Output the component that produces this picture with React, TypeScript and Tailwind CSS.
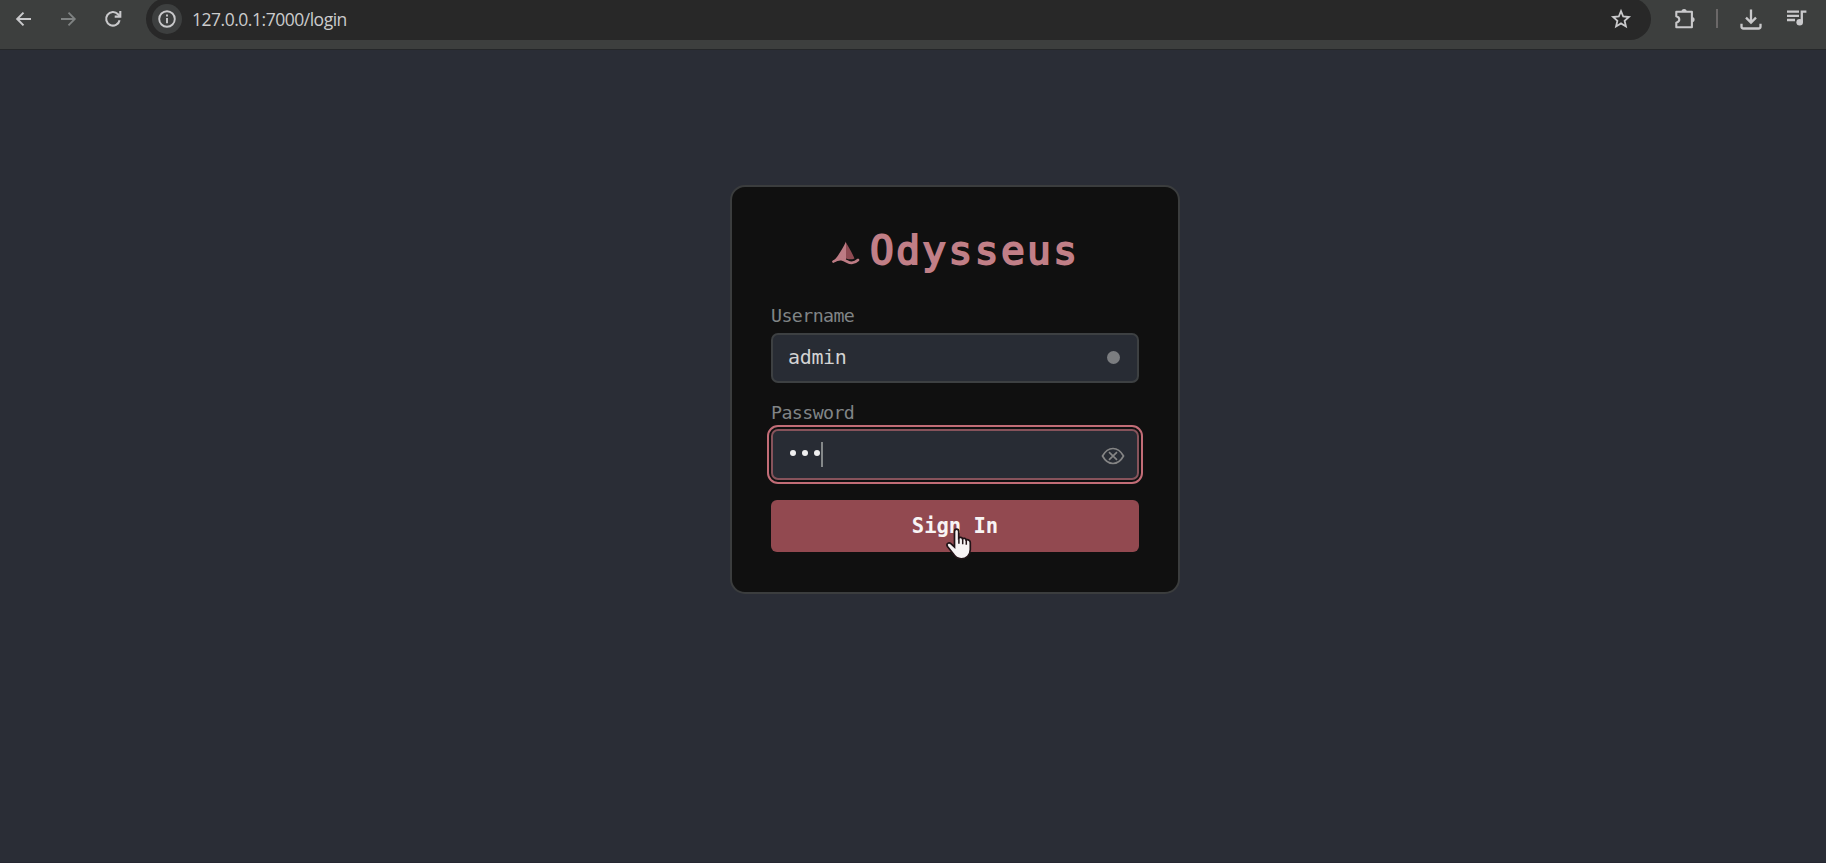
import { useState } from 'react';

function Toolbar() {
  return (
    <header className="flex h-[50px] shrink-0 items-start border-b border-[#252729] bg-[#3d3f3e] text-[#c9c9cb]">
      <div className="flex h-[37px] w-[146px] shrink-0 items-center">
        <svg className="ml-[14px] h-[20px] w-[20px]" viewBox="0 0 20 20" fill="none" stroke="currentColor" strokeWidth="2">
          <path d="M17 10H3.5M9.5 3.6 3.2 10l6.3 6.4" />
        </svg>
        <svg className="ml-[24px] h-[20px] w-[20px] text-[#7f8282]" viewBox="0 0 20 20" fill="none" stroke="currentColor" strokeWidth="1.8">
          <path d="M3 10h13.5M10.5 3.6 16.8 10l-6.3 6.4" />
        </svg>
        <svg className="ml-[25px] h-[20px] w-[20px]" viewBox="0 0 20 20" fill="none" stroke="currentColor" strokeWidth="2.1">
          <path d="M16.6 11.2A6.8 6.8 0 1 1 15 5.2l1.6 1.7" />
          <path d="M17.3 2v5.6h-5.6" />
        </svg>
      </div>

      <div className="-mt-[2px] flex h-[42px] w-[1505px] shrink-0 items-center rounded-full bg-[#282828] pr-[19px] pl-[6px]">
        <span className="flex h-[30px] w-[30px] items-center justify-center rounded-full bg-[#3d3f3f]">
          <svg className="h-[20px] w-[20px]" viewBox="0 0 20 20" fill="none" stroke="currentColor" strokeWidth="1.9">
            <circle cx="10" cy="10" r="7.8" />
            <path d="M10 9v5.2M10 5.4v2" />
          </svg>
        </span>
        <span className="ml-[10px] pt-[2px] font-['Open_Sans',sans-serif] text-[17.5px] leading-none tracking-[-0.48px] text-[#cccccd]">
          127.0.0.1:7000/login
        </span>
        <svg className="ml-auto h-[22px] w-[22px]" viewBox="0 0 22 22" fill="none" stroke="currentColor" strokeWidth="1.8">
          <path d="m11 3.2 2.2 5.3 5.7.5-4.3 3.8 1.3 5.6-4.9-3-4.9 3 1.3-5.6L3.1 9l5.7-.5z" />
        </svg>
      </div>

      <div className="flex h-[37px] items-center">
        <svg className="ml-[22px] h-[24px] w-[24px]" viewBox="0 0 24 24" fill="none" stroke="currentColor" strokeWidth="2.1">
          <path d="M3.3 4.7h15.6v15.6H3.3v-4.6c4-1.2 4-5.2 0-6.4z" strokeLinejoin="round" />
          <path d="M8.5 4.5a2.6 2.6 0 0 1 5.2 0zM19 9.9a2.6 2.6 0 0 1 0 5.2z" fill="currentColor" stroke="none" />
        </svg>
        <span className="ml-[19px] h-[19px] w-[2px] bg-[#6b6868]" />
        <svg className="ml-[21px] h-[24px] w-[24px]" viewBox="0 0 24 24" fill="none" stroke="currentColor" strokeWidth="2.3">
          <path d="M12 2.5v13M7 10.6l5 5 5-5M2.5 16.8v2.7q0 2 2 2h15q2 0 2-2v-2.7" />
        </svg>
        <svg className="ml-[23px] h-[22px] w-[22px]" viewBox="0 0 22 22" fill="none" stroke="currentColor" strokeWidth="2.3">
          <path d="M1 3.6h12M1 7.8h12M1 12h8M15.8 14V3.6h4.6" />
          <circle cx="13.7" cy="14.3" r="3.3" fill="currentColor" stroke="none" />
        </svg>
      </div>
    </header>
  );
}

function BoatLogo() {
  return (
    <svg className="mt-[16px] ml-px h-[24px] w-[28px] shrink-0" viewBox="0 0 28 24">
      <path d="M14 0.5V19C9.5 18.2 6 18.5 1.5 21.5 0.5 21.5 0.5 20.5 1 20 4 18.5 10 9 14 0.5Z" fill="#bd7b84" />
      <path d="M14 1.5C16.5 6 20 11.5 22.5 17.5 19.5 18.8 17 18.5 14 17.5Z" fill="#8f4b53" />
      <path d="M1.5 20.5C8 16.5 11.5 18.5 15 20.5c4 2.2 8 1.5 11-1.5" fill="none" stroke="#bd7b84" strokeWidth="2.6" strokeLinecap="round" />
    </svg>
  );
}

function HandCursor() {
  return (
    <svg className="pointer-events-none absolute top-[27px] left-[174px] h-[34px] w-[28px]" viewBox="0 0 28 34">
      <path
        d="M9.5 4.5c0-3.2 4.2-3.2 4.2 0v6.5c1.2-1.2 3.4-.8 3.8.7 1.3-.9 3.3-.3 3.6 1.2 2.1-.7 4.2.5 4.2 2.7v7c0 5.5-4 9.2-9 9.2-4.2 0-6.3-2-8.3-5.3L2.5 19.5c-1.8-2.8 1.4-4.6 3.4-2.8l3.6 3.3z"
        fill="#f7f3f4"
        stroke="#211317"
        strokeWidth="1.7"
      />
      <path d="M13.9 10.5v6.3M17.7 11.5v5.8M21.3 13v4.8" fill="none" stroke="#211317" strokeWidth="1.5" />
    </svg>
  );
}

export default function App() {
  const [username, setUsername] = useState('admin');

  return (
    <div className="flex h-[863px] flex-col overflow-hidden border-b border-[#252631] bg-[#2a2d36] font-['DejaVu_Sans_Mono',monospace]">
      <Toolbar />
      <main className="flex flex-1 items-start pt-[135px] pl-[730px]">
        <form className="h-[409px] w-[450px] rounded-[15px] border-2 border-[#3b3d3e] bg-[#101010] px-[39px] pt-[38px]">
          <div className="flex h-[50px] items-start pl-[60px]">
            <BoatLogo />
            <h1 className="ml-[10px] text-[39.5px] leading-[50px] font-normal tracking-[2.4px] text-[#c17f87] [-webkit-text-stroke:1.9px_#c17f87]">
              Odysseus
            </h1>
          </div>

          <label htmlFor="username" className="mt-[30px] block h-[28px] text-[18.3px] leading-[22px] tracking-[-0.6px] text-[#808486]">
            Username
          </label>
          <div className="relative">
            <input
              id="username"
              value={username}
              onChange={(e) => setUsername(e.target.value)}
              className="block h-[50px] w-full rounded-[7px] border-2 border-[#3d4042] bg-[#282c34] px-[15px] pb-[3px] text-[20px] tracking-[-0.35px] text-[#d3d3d3] outline-none"
            />
            <span className="absolute top-[18px] right-[19px] h-[13px] w-[13px] rounded-full bg-[#7b7d80]" />
          </div>

          <p className="mt-[19px] h-[27px] text-[18.3px] leading-[22px] tracking-[-0.6px] text-[#808486]">Password</p>
          <div className="relative flex h-[51px] items-center rounded-[7px] border-2 border-[#87535b] bg-[#282c34] pl-[17px] outline-2 outline-offset-2 outline-[#c26d77]">
            <div className="-mt-[4px] flex gap-[6px]">
              {[0, 1, 2].map((i) => (
                <span key={i} className="h-[6px] w-[6px] rounded-full bg-[#efefef]" />
              ))}
            </div>
            <span className="ml-px h-[25px] w-[2px] bg-[#848889]" />
            <svg className="absolute top-[15px] right-[12px] h-[20px] w-[24px]" viewBox="0 0 24 20" fill="none" stroke="#858585" strokeWidth="1.7">
              <path d="M1.5 10C4 5.5 7.8 2.5 12 2.5S20 5.5 22.5 10C20 14.5 16.2 17.5 12 17.5S4 14.5 1.5 10Z" />
              <path d="m8 6.2 8 7.6M16 6.2l-8 7.6" />
            </svg>
          </div>

          <div className="relative mt-[20px]">
            <button type="button" className="block h-[52px] w-full rounded-[6px] bg-[#924950] pt-px text-[20.5px] font-bold text-[#f8f4f4]">
              Sign In
            </button>
            <HandCursor />
          </div>
        </form>
      </main>
    </div>
  );
}
